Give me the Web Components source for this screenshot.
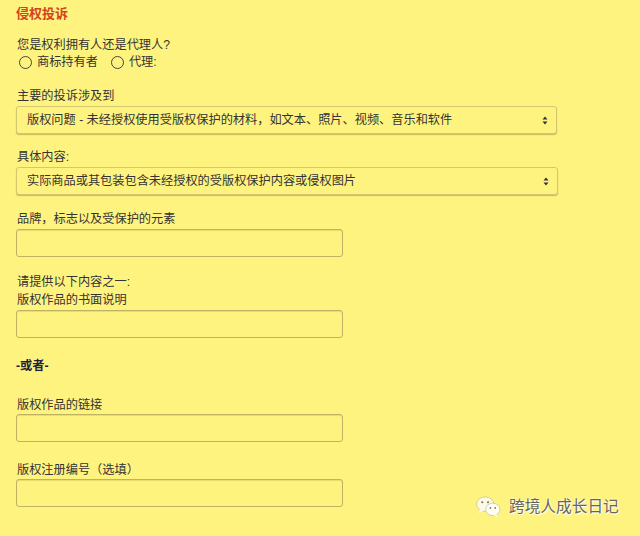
<!DOCTYPE html>
<html lang="zh">
<head>
<meta charset="utf-8">
<title>侵权投诉</title>
<style>
  html, body { margin: 0; height: 100%; }
  body {
    background: #fff380;
    color: #333;
    font: 12.2px/18px "Liberation Sans", "Noto Sans CJK SC", sans-serif;
    overflow: hidden;
  }
</style>
</head>
<body>
<complaint-form>
  <form-title>侵权投诉</form-title>

  <form-field style="--top:13px;--gap:0">
    您是权利拥有人还是代理人?
    <div slot="control" style="display:flex;gap:10px;height:16px;align-items:center;padding-top:1px">
      <radio-option>商标持有者</radio-option>
      <radio-option>代理:</radio-option>
    </div>
  </form-field>

  <form-field style="--top:16px;--gap:2px">
    主要的投诉涉及到
    <select-box slot="control" style="width:541px">版权问题 - 未经授权使用受版权保护的材料，如文本、照片、视频、音乐和软件</select-box>
  </form-field>

  <form-field style="--top:13px;--gap:2px">
    具体内容:
    <select-box slot="control" style="width:542px">实际商品或其包装包含未经授权的受版权保护内容或侵权图片</select-box>
  </form-field>

  <form-field style="--top:14px;--gap:2px">
    品牌，标志以及受保护的元素
    <text-box slot="control"></text-box>
  </form-field>

  <form-field style="--top:15px;--gap:2px">
    请提供以下内容之一:<br>版权作品的书面说明
    <text-box slot="control"></text-box>
  </form-field>

  <or-divider>-或者-</or-divider>

  <form-field style="--top:20px;--gap:1px">
    版权作品的链接
    <text-box slot="control"></text-box>
  </form-field>

  <form-field style="--top:18px;--gap:1px">
    版权注册编号（选填）
    <text-box slot="control"></text-box>
  </form-field>
</complaint-form>

<wechat-mark>跨境人成长日记</wechat-mark>

<script>
function shadow(el, html) {
  el.attachShadow({ mode: 'open' });
  el.shadowRoot.innerHTML = html;
}

class ComplaintForm extends HTMLElement {
  connectedCallback() {
    shadow(this, `
      <style>
        :host { display: block; padding: 5px 16px 0; }
      </style>
      <slot></slot>
    `);
  }
}

class FormTitle extends HTMLElement {
  connectedCallback() {
    shadow(this, `
      <style>
        :host { display: block; height: 17px; color: #d0451b; font-size: 13px; font-weight: bold; }
      </style>
      <slot></slot>
    `);
  }
}

class FormField extends HTMLElement {
  connectedCallback() {
    shadow(this, `
      <style>
        :host { display: block; margin-top: var(--top, 12px); }
        .label { padding: 1px 0 0 1px; margin-bottom: -1px; }
        .control { display: block; margin-top: var(--gap, 2px); }
      </style>
      <div class="label"><slot></slot></div>
      <div class="control"><slot name="control"></slot></div>
    `);
  }
}

class RadioOption extends HTMLElement {
  connectedCallback() {
    shadow(this, `
      <style>
        :host { display: inline-flex; align-items: center; gap: 5px; padding-left: 3px; }
        .dot {
          width: 11px; height: 11px; border-radius: 50%;
          border: 1px solid #444; box-sizing: content-box;
        }
      </style>
      <span class="dot"></span><slot></slot>
    `);
  }
}

class SelectBox extends HTMLElement {
  connectedCallback() {
    shadow(this, `
      <style>
        :host {
          display: flex; align-items: center; justify-content: space-between;
          box-sizing: border-box; height: 28px; padding: 0 8px 0 10px;
          border: 1px solid #d2c871; border-radius: 3px;
          box-shadow: 0 1px 1px rgba(90, 80, 20, .35);
          background: #fff380;
        }
        svg { display: block; }
      </style>
      <slot></slot>
      <svg width="6" height="9" viewBox="0 0 6 9" aria-hidden="true">
        <path d="M3 0.5 5.5 3.5H.5zM3 8.5 .5 5.5H5.5z" fill="#333"/>
      </svg>
    `);
  }
}

class TextBox extends HTMLElement {
  connectedCallback() {
    shadow(this, `
      <style>
        :host {
          display: block; box-sizing: border-box; width: 327px; height: 28px;
          border: 1px solid #bdb362; border-radius: 3px;
          box-shadow: inset 0 1px 1px rgba(90, 80, 20, .15);
          background: #fff380;
        }
      </style>
    `);
  }
}

class OrDivider extends HTMLElement {
  connectedCallback() {
    shadow(this, `
      <style>
        :host { display: block; margin-top: 19px; color: #1f1f3a; font-weight: bold; }
      </style>
      <slot></slot>
    `);
  }
}

class WechatMark extends HTMLElement {
  connectedCallback() {
    shadow(this, `
      <style>
        :host {
          position: absolute; left: 475px; top: 495px;
          display: flex; align-items: center; gap: 7px;
          font-size: 15.7px; line-height: 22px; color: #66665a;
          text-shadow: 0 0 2px #fff, 1px 1px 1px #fff;
        }
        svg { display: block; }
      </style>
      <svg width="27" height="23" viewBox="0 0 28 24" aria-hidden="true">
        <ellipse cx="10.5" cy="9.5" rx="9" ry="7.5" fill="#fdfbe8" stroke="#b8b38a" stroke-width=".6"/>
        <path d="M5 15 4 19 9 16z" fill="#fdfbe8"/>
        <ellipse cx="18.5" cy="15" rx="7.5" ry="6.5" fill="#fffef2" stroke="#b8b38a" stroke-width=".6"/>
        <path d="M22 20 24 23 19 21z" fill="#fffef2"/>
        <circle cx="7.5" cy="7.5" r="1.1" fill="#77735a"/>
        <circle cx="13.5" cy="7.5" r="1.1" fill="#77735a"/>
        <circle cx="16" cy="13.5" r=".9" fill="#77735a"/>
        <circle cx="21" cy="13.5" r=".9" fill="#77735a"/>
      </svg>
      <slot></slot>
    `);
  }
}

customElements.define('complaint-form', ComplaintForm);
customElements.define('form-title', FormTitle);
customElements.define('form-field', FormField);
customElements.define('radio-option', RadioOption);
customElements.define('select-box', SelectBox);
customElements.define('text-box', TextBox);
customElements.define('or-divider', OrDivider);
customElements.define('wechat-mark', WechatMark);
</script>
</body>
</html>
